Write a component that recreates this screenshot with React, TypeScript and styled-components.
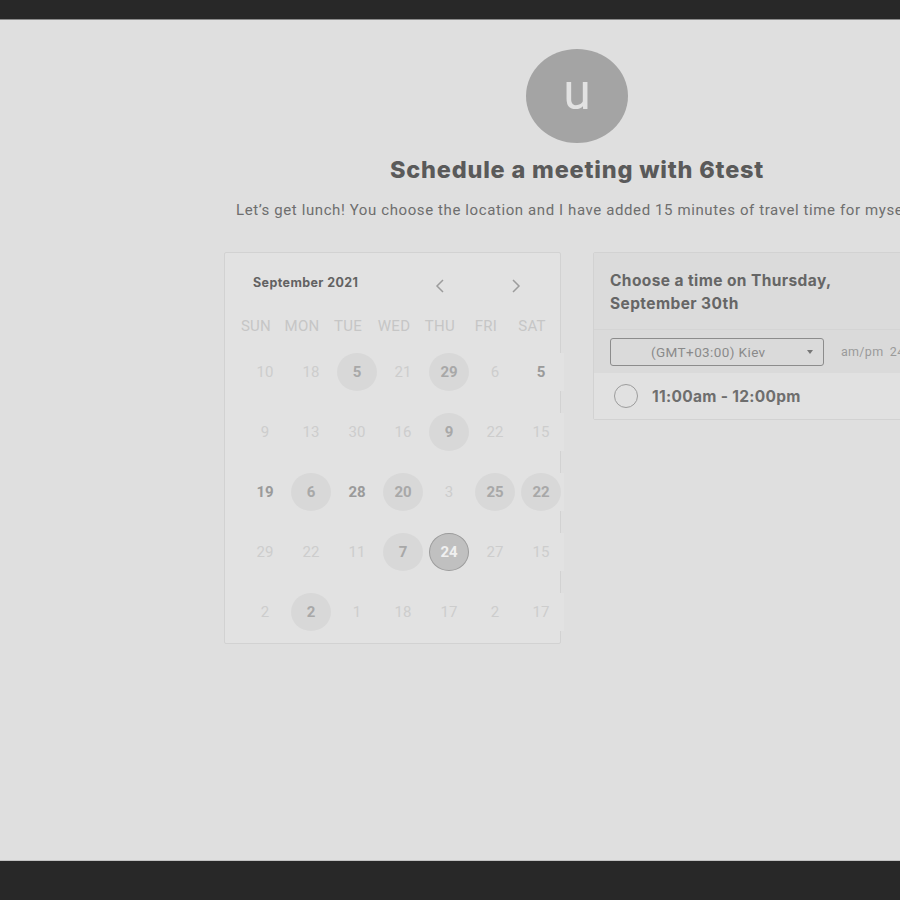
import React from "react";
import styled, { createGlobalStyle } from "styled-components";

const Global = createGlobalStyle`
  html, body { margin: 0; padding: 0; background: #282828; }
  body { font-family: Roboto, "Liberation Sans", sans-serif; overflow: hidden; }
`;

const Screen = styled.div`
  width: 900px;
  height: 900px;
  display: flex;
  flex-direction: column;
  background: #282828;
  overflow: hidden;
`;

const TopBar = styled.div`
  height: 19px;
  flex: none;
  background: #282828;
  border-bottom: 1px solid #8a8a8a;
`;

const Main = styled.main`
  height: 840px;
  flex: none;
  background: #dfdfdf;
  border-bottom: 1px solid #c2c2c2;
  overflow: hidden;
`;

const Stage = styled.div`
  width: 1154px;
  display: flex;
  flex-direction: column;
  align-items: center;
  padding-top: 29px;
`;

const Avatar = styled.div`
  width: 102px;
  height: 94px;
  border-radius: 50%;
  background: #a4a4a4;
  color: #e2e2e2;
  display: flex;
  align-items: center;
  justify-content: center;
  font-family: Roboto, "Liberation Sans", sans-serif;
  font-size: 50px;
  line-height: 1;
  padding-bottom: 8px;
  box-sizing: border-box;
`;

const Title = styled.h1`
  margin: 13px 0 0;
  font-family: Inter, "Liberation Sans", sans-serif;
  font-weight: 800;
  font-size: 23.5px;
  line-height: 28px;
  color: #5a5a5a;
  letter-spacing: 0.8px;
  white-space: nowrap;
`;

const Subtitle = styled.p`
  margin: 16px 0 0;
  font-size: 15px;
  letter-spacing: 0.6px;
  line-height: 20px;
  color: #6e6e6e;
  white-space: nowrap;
`;

const Panels = styled.div`
  display: flex;
  gap: 32px;
  margin-top: 32px;
  align-items: flex-start;
`;

const CalendarCard = styled.section`
  width: 337px;
  height: 392px;
  box-sizing: border-box;
  border: 1px solid #d2d2d2;
  border-radius: 2px;
  background: #e2e2e2;
`;

const CalHeader = styled.div`
  display: flex;
  align-items: center;
  height: 58px;
  padding: 0 0 0 28px;
`;

const Month = styled.div`
  font-family: Inter, "Liberation Sans", sans-serif;
  font-weight: 700;
  font-size: 12.5px;
  letter-spacing: 0.4px;
  color: #626262;
  width: 177px;
`;

const NavButton = styled.button`
  border: 0;
  background: none;
  padding: 0;
  width: 20px;
  height: 20px;
  margin-top: 8px;
  display: flex;
  align-items: center;
  justify-content: center;
  & + & { margin-left: 56px; }
`;

const WeekGrid = styled.div`
  display: grid;
  grid-template-columns: repeat(7, 46px);
  margin-left: 8px;
  margin-top: 5px;
  height: 20px;
  align-items: center;
`;

const WeekDay = styled.div`
  text-align: center;
  font-size: 15px;
  letter-spacing: 0.3px;
  color: #c6c6c6;
`;

const DateGrid = styled.div`
  display: grid;
  grid-template-columns: repeat(7, 46px);
  grid-auto-rows: 38px;
  row-gap: 22px;
  margin-left: 17px;
  margin-top: 17px;
  width: 322px;
`;

const Cell = styled.div`
  background: #e2e2e2;
  display: flex;
  align-items: center;
  justify-content: center;
`;

type Kind = "off" | "avail" | "bold" | "sel";

const Day = styled.div<{ $kind: Kind }>`
  width: 40px;
  height: 38px;
  border-radius: 50%;
  display: flex;
  align-items: center;
  justify-content: center;
  font-size: 15px;
  box-sizing: border-box;
  font-weight: ${(p) => (p.$kind === "off" ? 400 : 700)};
  color: ${(p) =>
    p.$kind === "off" ? "#cdcdcd" : p.$kind === "sel" ? "#f0f0f0" : p.$kind === "bold" ? "#9a9a9a" : "#a8a8a8"};
  background: ${(p) =>
    p.$kind === "avail" ? "#d8d8d8" : p.$kind === "sel" ? "#c0c0c0" : "transparent"};
  border: ${(p) => (p.$kind === "sel" ? "1px solid #9c9c9c" : "0")};
`;

const TimeCard = styled.section`
  width: 337px;
  box-sizing: border-box;
  border: 1px solid #d2d2d2;
  border-radius: 2px;
  background: #e1e1e1;
`;

const TimeHeader = styled.div`
  height: 77px;
  box-sizing: border-box;
  padding: 16px 16px 0;
  background: #dbdbdb;
  border-bottom: 1px solid #d4d4d4;
  font-family: Inter, "Liberation Sans", sans-serif;
  font-weight: 700;
  font-size: 15.5px;
  letter-spacing: 0.4px;
  line-height: 23px;
  color: #666;
`;

const ZoneRow = styled.div`
  height: 43px;
  box-sizing: border-box;
  padding: 8px 16px 0;
  background: #dadada;
  display: flex;
  align-items: flex-start;
  gap: 17px;
`;

const Select = styled.div`
  width: 214px;
  flex: none;
  height: 28px;
  box-sizing: border-box;
  border: 1px solid #8c8c8c;
  border-radius: 3px;
  display: flex;
  align-items: center;
  padding: 0 10px 0 40px;
  font-size: 13.5px;
  letter-spacing: 0.4px;
  color: #8a8a8a;
`;

const SelectText = styled.span`
  flex: 1;
`;

const Caret = styled.span`
  width: 0;
  height: 0;
  border-left: 3.5px solid transparent;
  border-right: 3.5px solid transparent;
  border-top: 4px solid #777;
`;

const Format = styled.div`
  font-size: 12.5px;
  letter-spacing: 0.3px;
  color: #9a9a9a;
  line-height: 28px;
  word-spacing: 3px;
  white-space: nowrap;
`;

const SlotRow = styled.div`
  height: 46px;
  display: flex;
  align-items: center;
  padding-left: 20px;
  gap: 14px;
  background: #e1e1e1;
`;

const Radio = styled.span`
  width: 24px;
  height: 24px;
  box-sizing: border-box;
  border-radius: 50%;
  border: 1.5px solid #9c9c9c;
`;

const SlotLabel = styled.span`
  font-family: Inter, "Liberation Sans", sans-serif;
  font-weight: 700;
  font-size: 15.5px;
  letter-spacing: 0.3px;
  color: #6e6e6e;
`;

const Bottom = styled.div`
  flex: 1;
  background: #282828;
`;

const Chevron = ({ dir }: { dir: "l" | "r" }) => (
  <svg width="10" height="14" viewBox="0 0 10 14">
    <path
      d={dir === "l" ? "M8 1 L2 7 L8 13" : "M2 1 L8 7 L2 13"}
      fill="none"
      stroke="#9c9c9c"
      strokeWidth="1.5"
    />
  </svg>
);

const weekDays = ["SUN", "MON", "TUE", "WED", "THU", "FRI", "SAT"];

const rows: [string, Kind][][] = [
  [["10", "off"], ["18", "off"], ["5", "avail"], ["21", "off"], ["29", "avail"], ["6", "off"], ["5", "bold"]],
  [["9", "off"], ["13", "off"], ["30", "off"], ["16", "off"], ["9", "avail"], ["22", "off"], ["15", "off"]],
  [["19", "bold"], ["6", "avail"], ["28", "bold"], ["20", "avail"], ["3", "off"], ["25", "avail"], ["22", "avail"]],
  [["29", "off"], ["22", "off"], ["11", "off"], ["7", "avail"], ["24", "sel"], ["27", "off"], ["15", "off"]],
  [["2", "off"], ["2", "avail"], ["1", "off"], ["18", "off"], ["17", "off"], ["2", "off"], ["17", "off"]],
];

export default function App() {
  return (
    <>
      <Global />
      <Screen>
        <TopBar />
        <Main>
          <Stage>
            <Avatar>u</Avatar>
            <Title>Schedule a meeting with 6test</Title>
            <Subtitle>
              Let’s get lunch! You choose the location and I have added 15 minutes of travel time for myself.
            </Subtitle>
            <Panels>
              <CalendarCard>
                <CalHeader>
                  <Month>September 2021</Month>
                  <NavButton aria-label="Previous month">
                    <Chevron dir="l" />
                  </NavButton>
                  <NavButton aria-label="Next month">
                    <Chevron dir="r" />
                  </NavButton>
                </CalHeader>
                <WeekGrid>
                  {weekDays.map((d) => (
                    <WeekDay key={d}>{d}</WeekDay>
                  ))}
                </WeekGrid>
                <DateGrid>
                  {rows.flat().map(([n, k], i) => (
                    <Cell key={i}>
                      <Day $kind={k}>{n}</Day>
                    </Cell>
                  ))}
                </DateGrid>
              </CalendarCard>
              <TimeCard>
                <TimeHeader>
                  Choose a time on Thursday,
                  <br />
                  September 30th
                </TimeHeader>
                <ZoneRow>
                  <Select>
                    <SelectText>(GMT+03:00) Kiev</SelectText>
                    <Caret />
                  </Select>
                  <Format>am/pm 24hr</Format>
                </ZoneRow>
                <SlotRow>
                  <Radio />
                  <SlotLabel>11:00am - 12:00pm</SlotLabel>
                </SlotRow>
              </TimeCard>
            </Panels>
          </Stage>
        </Main>
        <Bottom />
      </Screen>
    </>
  );
}
